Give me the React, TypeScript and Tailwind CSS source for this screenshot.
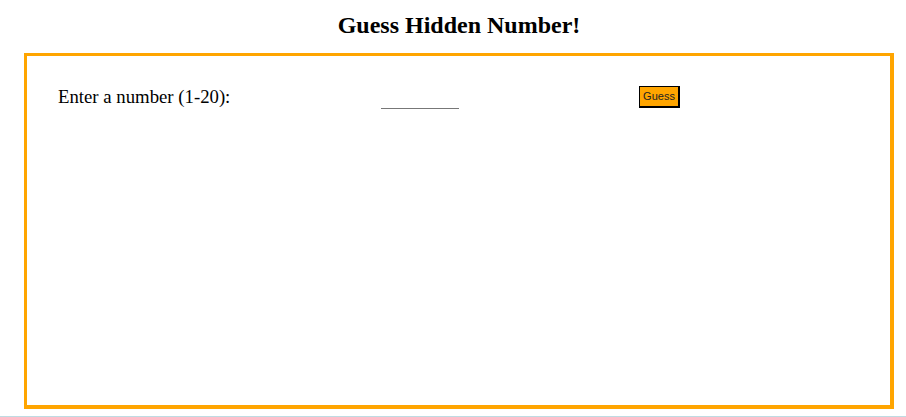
const App = () => {
    return (
        <div className="h-[417px] w-[906px] overflow-hidden bg-white font-['Liberation_Serif',serif] text-black">
            <h1 className="ml-[24px] h-[53px] w-[870px] pt-[11px] text-center text-[24px] font-bold leading-[28px]">
                Guess Hidden Number!
            </h1>
            <div className="ml-[24px] h-[356px] w-[870px] border-[3px] border-b-4 border-r-4 border-[#ffa500]">
                <div className="flex items-start pl-[31px] pt-[30px]">
                    <label
                        htmlFor="guess"
                        className="w-[323px] text-[18.75px] leading-[22px]"
                    >
                        Enter a number (1-20):
                    </label>
                    <input
                        id="guess"
                        type="text"
                        className="mt-[1px] h-[22px] w-[78px] border-0 border-b border-[#777777] bg-transparent outline-none"
                    />
                    <div className="w-[180px]" />
                    <button
                        type="button"
                        className="h-[22px] w-[41px] border border-b-2 border-r-2 border-black bg-[#ffa500] font-['Liberation_Sans',sans-serif] text-[11px] leading-none text-[#222]"
                    >
                        Guess
                    </button>
                </div>
            </div>
            <div className="mt-[7px] h-px w-full bg-[#bfdbe2]" />
        </div>
    );
};

export default App;
